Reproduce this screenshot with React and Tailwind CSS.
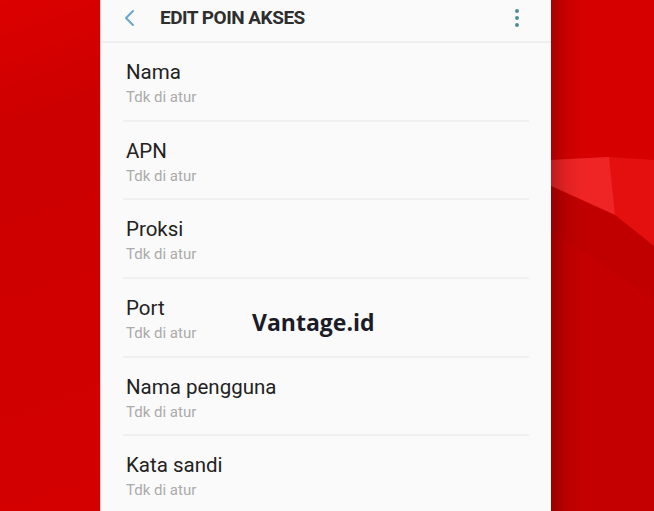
import React from "react";

const items = ["Nama", "APN", "Proksi", "Port", "Nama pengguna", "Kata sandi"];

function RightArt() {
  return (
    <svg className="block h-full w-full" viewBox="0 0 103 511" preserveAspectRatio="none">
      <defs>
        <linearGradient id="edge" x1="0" x2="1" y1="0" y2="0">
          <stop offset="0" stopColor="#000" stopOpacity="0.22" />
          <stop offset="0.15" stopColor="#000" stopOpacity="0.06" />
          <stop offset="0.3" stopColor="#000" stopOpacity="0" />
        </linearGradient>
      </defs>
      <rect x="0" y="0" width="103" height="511" fill="#c40000" />
      <polygon points="0,0 103,0 103,160 0,160" fill="#d60000" />
      <polygon points="0,160 58,157 103,160 103,246 0,186" fill="#e41010" />
      <polygon points="0,160 58,157 64,215 0,186" fill="#ef2424" />
      <polygon points="0,186 64,215 103,246 103,300 0,230" fill="#c00000" />
      <rect x="0" y="0" width="103" height="511" fill="url(#edge)" />
    </svg>
  );
}

export default function App() {
  return (
    <div className="relative flex h-[511px] w-[654px] overflow-hidden" style={{ fontFamily: "Roboto, 'Noto Sans', sans-serif" }}>
      <div className="h-full w-[100px] bg-[linear-gradient(160deg,#dc0000_0%,#cc0000_25%,#cf0000_55%,#d40000_100%)]" />
      <div className="flex h-full w-[451px] flex-col bg-[#fafafa] border-l border-[#f3c9c9]">
        <div className="flex h-[43px] shrink-0 items-center border-b-2 border-[#efefef] pb-[5px] pl-[22px] pr-[32px]">
          <svg width="14" height="18" viewBox="0 0 14 18">
            <path d="M10 2 L3 9 L10 16" fill="none" stroke="#6aa5cf" strokeWidth="2" strokeLinecap="round" strokeLinejoin="round" />
          </svg>
          <div className="ml-[23px] text-[19px] font-bold tracking-[-0.5px] text-[#2e2e2e]">EDIT POIN AKSES</div>
          <div className="ml-auto flex flex-col gap-[3px]">
            <span className="block h-[4px] w-[4px] rounded-full bg-[#4f8f93]" />
            <span className="block h-[4px] w-[4px] rounded-full bg-[#4f8f93]" />
            <span className="block h-[4px] w-[4px] rounded-full bg-[#4f8f93]" />
          </div>
        </div>
        <div className="flex flex-col px-[22px]">
          {items.map((t, i) => (
            <div key={t} className={"flex h-[78.7px] shrink-0 flex-col pl-[3px] pt-[17px] " + (i < items.length - 1 ? "border-b-2 border-[#f0f0f0]" : "")}>
              <div className="text-[20.5px] leading-[24px] text-[#222]">{t}</div>
              <div className="mt-[4px] text-[15px] leading-[18px] text-[#ababab]">Tdk di atur</div>
            </div>
          ))}
        </div>
      </div>
      <div className="h-full flex-1">
        <RightArt />
      </div>
      <div className="absolute left-[252px] top-[305px] text-[23px] font-bold text-[#1c1c28]" style={{ fontFamily: "'Open Sans', sans-serif" }}>
        Vantage.id
      </div>
    </div>
  );
}
